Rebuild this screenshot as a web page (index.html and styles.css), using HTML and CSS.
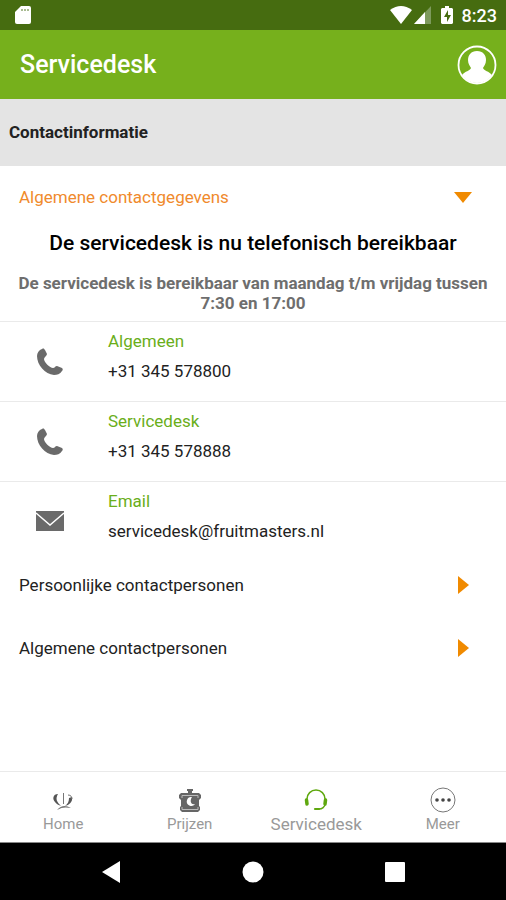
FILE: index.html
```html
<!DOCTYPE html>
<html lang="nl">
<head>
  <meta charset="UTF-8">
  <meta name="viewport" content="width=device-width, initial-scale=1.0">
  <title>Servicedesk</title>
  <link rel="stylesheet" href="styles.css">
</head>
<body>
  <div class="statusbar">
    <svg class="sd" width="16" height="20" viewBox="0 0 16 20">
      <path fill="#fff" d="M6 1h8a2 2 0 0 1 2 2v14a2 2 0 0 1-2 2H2a2 2 0 0 1-2-2V7z"/>
      <path stroke="#a9bb92" stroke-width="2" d="M6 5h2M9 5h2M12 5h2"/>
    </svg>
    <svg width="22" height="18" viewBox="0 0 22 18">
      <path fill="#fff" d="M11 18 0 4Q11-4 22 4z"/>
    </svg>
    <svg class="signal" width="17" height="18" viewBox="0 0 17 18">
      <path fill="#7d9a5c" d="M17 0v18H0z"/>
      <path fill="#fff" d="M11 6v12H0z"/>
    </svg>
    <svg class="battery" width="12" height="18" viewBox="0 0 12 18">
      <path fill="#fff" d="M4 0h4v2h3l1 1v14l-1 1H1l-1-1V3l1-1h3z"/>
      <path fill="#466c10" d="M7 4 3 11h3v5l4-7H7z"/>
    </svg>
    <span class="clock">8:23</span>
  </div>

  <header>
    <h1>Servicedesk</h1>
    <button class="profile" aria-label="Profiel">
      <svg width="40" height="40" viewBox="0 0 40 40">
        <circle cx="20" cy="20" r="18.500" fill="none" stroke="#fff" stroke-width="1.800"/>
        <path fill="#fff" d="M20 6c6 0 9 4 9 9 0 4-2 6-3 8 1 3 6 3 9 7-3 5-9 8-15 8S8 35 5 30c3-4 8-4 9-7-1-2-3-4-3-8 0-5 3-9 9-9z"/>
      </svg>
    </button>
  </header>

  <h2 class="subheader">Contactinformatie</h2>

  <main>
    <button class="accordion open" aria-expanded="true">Algemene contactgegevens
      <svg width="20" height="20" viewBox="0 0 20 20"><path fill="#f08a00" d="M1 5h18l-9 11z"/></svg>
    </button>
    <div class="panel">
      <h3>De servicedesk is nu telefonisch bereikbaar</h3>
      <p class="hours">De servicedesk is bereikbaar van maandag t/m vrijdag tussen 7:30 en 17:00</p>
      <a class="contact" href="tel:+31345578800">
        <svg width="30" height="30" viewBox="0 0 30 30"><use href="#phone"/></svg>
        <span class="info"><span class="label">Algemeen</span><span>+31 345 578800</span></span>
      </a>
      <a class="contact" href="tel:+31345578888">
        <svg width="30" height="30" viewBox="0 0 30 30">
          <path id="phone" fill="#6a6a6a" d="M7 2c2-1 2 0 3 1l2 4c0 2-3 3-3 5 0 3 6 9 9 9 2 0 2-2 4-2l5 2c1 1 1 2 0 3-2 3-5 4-8 4C10 27 2 18 2 9c0-3 2-6 5-7z"/>
        </svg>
        <span class="info"><span class="label">Servicedesk</span><span>+31 345 578888</span></span>
      </a>
      <a class="contact" href="mailto:servicedesk@fruitmasters.nl">
        <svg width="30" height="30" viewBox="0 0 30 30">
          <path fill="#6a6a6a" d="M1 4h28v20H1z"/>
          <path fill="none" stroke="#fff" stroke-width="1.500" d="m1 6 14 12L29 6"/>
        </svg>
        <span class="info"><span class="label">Email</span><span>servicedesk@fruitmasters.nl</span></span>
      </a>
    </div>
    <button class="accordion" aria-expanded="false">Persoonlijke contactpersonen
      <svg width="20" height="20" viewBox="0 0 20 20"><path fill="#f08a00" d="M5 1v18l11-9z"/></svg>
    </button>
    <button class="accordion" aria-expanded="false">Algemene contactpersonen
      <svg width="20" height="20" viewBox="0 0 20 20"><path fill="#f08a00" d="M5 1v18l11-9z"/></svg>
    </button>
  </main>

  <nav class="tabs">
    <a class="tab" href="#home">
      <svg width="26" height="26" viewBox="0 0 26 26">
        <path fill="#555" d="M8 7C3 7 2 12 5 15c1 2 4 3 6 4-4-4-6-7-3-12zM22 10c1 5-3 8-7 9 3-2 4-5 4-8z"/>
        <path fill="none" stroke="#777" d="M18 8c3 0 4 2 4 4M13.500 6v11"/>
        <path fill="#777" d="M7 23c4-5 9-5 14-2-5-1-9-1-14 2z"/>
      </svg>
      Home
    </a>
    <a class="tab" href="#prijzen">
      <svg width="26" height="26" viewBox="0 0 26 26">
        <path fill="#666" d="M10 2h6v2h-1v2h7l2 2v3l-2 2v6l1 1v3l-2 2H5l-2-2v-3l1-1v-6l-2-2V8l2-2h7V4h-1z"/>
        <path fill="none" stroke="#bbb" d="M5 11V8.500h16V11M5 20v2.500h16V20"/>
        <path fill="#fff" d="M15 10a4.500 4.500 0 1 0 3 7c-5 1-5-4-3-7z"/>
      </svg>
      Prijzen
    </a>
    <a class="tab active" href="#servicedesk">
      <svg width="26" height="26" viewBox="0 0 26 26" fill="none" stroke="#5fa80f" stroke-linecap="round">
        <path stroke-width="1.500" d="M4 12C4 7 8 3 13 3s9 4 9 9M22 17c0 3-3 5-6 5"/>
        <path stroke-width="3.500" d="m3.500 13 .5 4M22.500 13l-.5 4"/>
        <path stroke-width="2.200" d="M12 22h4"/>
      </svg>
      Servicedesk
    </a>
    <a class="tab" href="#meer">
      <svg width="26" height="26" viewBox="0 0 26 26">
        <circle cx="13" cy="13" r="12" fill="none" stroke="#777"/>
        <g fill="#444"><circle cx="7" cy="13" r="1.800"/><circle cx="13" cy="13" r="1.800"/><circle cx="19" cy="13" r="1.800"/></g>
      </svg>
      Meer
    </a>
  </nav>

  <div class="softkeys">
    <button aria-label="Terug"><svg width="22" height="22" viewBox="0 0 22 22"><path fill="#fff" d="M20 0v22L2 11z"/></svg></button>
    <button aria-label="Start"><svg width="22" height="22" viewBox="0 0 22 22"><circle cx="11" cy="11" r="10.500" fill="#fff"/></svg></button>
    <button aria-label="Overzicht"><svg width="22" height="22" viewBox="0 0 22 22"><rect x="1" y="1" width="20" height="20" rx="1" fill="#fff"/></svg></button>
  </div>
</body>
</html>
```
FILE: styles.css
```css
* { box-sizing: border-box; }
body { margin: 0; min-height: 100vh; display: flex; flex-direction: column; font-family: Roboto, sans-serif; font-size: 17px; color: #222; background: #fff; }
h1, h2, h3, p { margin: 0; }
a { color: inherit; text-decoration: none; }
button { padding: 0; border: none; background: none; font: inherit; color: inherit; cursor: pointer; }
svg { display: block; flex: none; }

.statusbar { display: flex; align-items: center; height: 30px; padding: 0 9px 0 15px; background: #466c10; color: #fff; }
.sd { margin-right: auto; }
.signal { margin-left: 2px; }
.battery { margin: 0 9px 0 10px; }
.clock { font-size: 18px; font-weight: 500; }

header { display: flex; align-items: center; justify-content: space-between; height: 69px; padding: 0 9px 0 20px; background: #76b01c; color: #fff; }
h1 { font-size: 25px; font-weight: 500; }

.subheader { padding: 0 9px; font-size: 17px; font-weight: 700; line-height: 67px; background: #e4e4e4; }

main { flex: 1; padding-top: 7px; }
.accordion { display: flex; align-items: center; justify-content: space-between; width: 100%; height: 48px; padding: 0 33px 0 19px; margin-bottom: 15px; text-align: left; }
.accordion.open { margin-bottom: 8px; color: #f08a2c; }
.panel h3 { font-size: 21px; font-weight: 500; line-height: 28px; text-align: center; color: #000; }
.hours { padding: 16px 8px 8px; font-weight: 700; line-height: 20px; text-align: center; color: #6e6e6e; }

.contact { display: flex; align-items: center; gap: 43px; height: 80px; padding-left: 35px; border-top: 1px solid #eaeaea; }
.info { display: flex; flex-direction: column; gap: 6px; padding-bottom: 11px; line-height: 24px; }
.label { color: #6aae1a; }

.tabs { display: grid; grid-template-columns: repeat(4, 1fr); height: 72px; padding-top: 15px; border-top: 1px solid #eaeaea; border-bottom: 1px solid #888; }
.tab { display: flex; flex-direction: column; align-items: center; font-size: 15px; line-height: 22px; color: #999; }
.tab.active { font-size: 17px; }

.softkeys { display: flex; align-items: center; justify-content: center; gap: 120px; height: 57px; background: #000; }
```
